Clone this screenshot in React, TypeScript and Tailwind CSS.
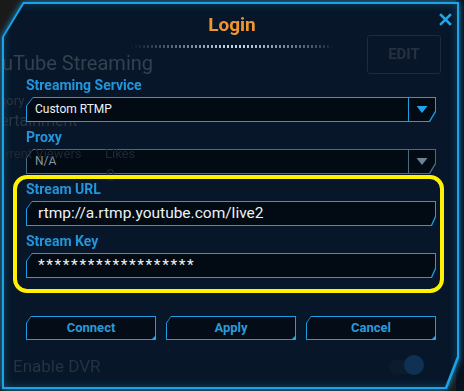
import React from 'react';

const font = { fontFamily: '"Segoe UI", Roboto, "Noto Sans", sans-serif' };

const Field: React.FC<{ label: string; children: React.ReactNode }> = ({ label, children }) => (
  <div className="flex flex-col gap-[3px]">
    <div className="h-[18px] leading-[18px] text-[14px] font-bold text-[#2196dc]">{label}</div>
    {children}
  </div>
);

const SelectBox: React.FC<{ value: string; disabled?: boolean }> = ({ value, disabled }) => (
  <div
    className={`h-[25px] p-px [clip-path:polygon(7px_0,100%_0,100%_calc(100%_-_10px),calc(100%_-_6px)_100%,0_100%,0_9px)] ${
      disabled ? 'bg-[#4d6a80]' : 'bg-[#1b9fe3]'
    }`}
  >
    <div className="h-full flex bg-[#020a13] [clip-path:polygon(6px_0,100%_0,100%_calc(100%_-_10px),calc(100%_-_6px)_100%,0_100%,0_8px)]">
      <div className={`flex-1 pl-[8px] leading-[23px] text-[12px] ${disabled ? 'text-[#8796a3]' : 'text-[#eef2f5]'}`}>
        {value}
      </div>
      <div className={`w-[27px] flex items-center justify-center border-l ${disabled ? 'border-[#4d6a80]' : 'border-[#1b9fe3]'}`}>
        <div
          className={`w-[11px] h-[7px] [clip-path:polygon(0_0,100%_0,50%_100%)] ${
            disabled ? 'bg-[#6b8598]' : 'bg-[#1ea4ea]'
          }`}
        />
      </div>
    </div>
  </div>
);

const TextBox: React.FC<{ value: string; className?: string }> = ({ value, className = '' }) => (
  <div className="h-[25px] p-px bg-[#1b9fe3] [clip-path:polygon(6px_0,100%_0,100%_calc(100%_-_9px),calc(100%_-_4px)_100%,0_100%,0_8px)]">
    <div className="h-full bg-[#020a13] [clip-path:polygon(5px_0,100%_0,100%_calc(100%_-_9px),calc(100%_-_4px)_100%,0_100%,0_7px)]">
      <div className={`pl-[11px] leading-[23px] text-[15.5px] text-[#eef2f5] ${className}`}>{value}</div>
    </div>
  </div>
);

const Btn: React.FC<{ children: React.ReactNode }> = ({ children }) => (
  <div className="relative w-[130px] h-[24px]">
    <div className="h-full p-px bg-[#1b9fe3] [clip-path:polygon(5px_0,100%_0,100%_100%,0_100%,0_7px)]">
      <div className="h-full bg-[#030c17] [clip-path:polygon(4px_0,100%_0,100%_100%,0_100%,0_6px)] flex items-center justify-center text-[13px] font-bold text-[#2a9ad8]">
        {children}
      </div>
    </div>
    <div className="absolute right-0 bottom-0 w-[5px] h-[5px] bg-[#1ea4ea] [clip-path:polygon(100%_0,100%_100%,0_100%)]" />
  </div>
);

export default function App() {
  return (
    <div className="relative w-[464px] h-[391px] overflow-hidden bg-[#1a1a1a]" style={font}>
      <div className="absolute right-0 top-0 bottom-0 w-[8px] bg-[#08111c]" />
      {/* dialog frame */}
      <div className="absolute left-[2px] top-[2px] w-[457px] h-[387px] [filter:drop-shadow(0_0_3px_rgba(27,159,227,0.9))]">
        <div className="h-full p-[2px] bg-[#1ba3ea] [clip-path:polygon(21px_0,100%_0,100%_calc(100%_-_31px),calc(100%_-_12px)_100%,0_100%,0_35px)]">
          <div className="relative h-full flex flex-col pt-[10px] pl-[22px] pr-[21px] bg-[#071628] shadow-[inset_0_0_10px_rgba(27,159,227,0.35)] [clip-path:polygon(20px_0,100%_0,100%_calc(100%_-_31px),calc(100%_-_12px)_100%,0_100%,0_33px)]">
            {/* ghost content of the page behind the dialog */}
            <div className="absolute left-[-2px] top-[47px] text-[20px] text-[#364150] leading-[24px]">uTube Streaming</div>
            <div className="absolute left-[-5px] top-[89px] text-[13px] text-[#2a3442] leading-[16px]">gory</div>
            <div className="absolute left-[-4px] top-[108px] text-[16px] text-[#2a3442] leading-[18px]">ertainment</div>
            <div className="absolute left-[363px] top-[31px] w-[74px] h-[39px] border border-[#1f2b3a] rounded-[3px] flex items-center justify-center text-[15px] font-bold text-[#263140]">
              EDIT
            </div>
            <div className="absolute left-[9px] top-[351px] text-[17px] text-[#263243] leading-[22px]">Enable DVR</div>
            <div className="absolute left-[385px] top-[356px] w-[34px] h-[14px] rounded-full bg-[#0b1c2d]" />
            <div className="absolute left-[400px] top-[351px] w-[20px] h-[20px] rounded-full bg-[#0f3254]" />
            <div className="absolute right-[5px] top-[9px] text-[#1ea4ea]">
              <svg width="13" height="13" viewBox="0 0 13 13">
                <path d="M2 2 L11 11 M11 2 L2 11" stroke="currentColor" strokeWidth="2.6" strokeLinecap="square" />
              </svg>
            </div>

            <div className="relative flex flex-col">
              <div className="h-[22px] leading-[22px] text-center text-[19px] font-bold text-[#f0962e] pl-[2px]">Login</div>
              <div className="mt-[9px] ml-[104px] w-[204px] h-[3px] bg-[radial-gradient(circle,#c9dbe8_1.1px,transparent_1.5px)] bg-[length:4px_3px] [mask-image:linear-gradient(to_right,transparent,rgba(0,0,0,0.5)_25%,black_48%,black_55%,rgba(0,0,0,0.3)_92%,transparent)]" />

              <div className="mt-[28px] flex flex-col gap-[6px]">
                <Field label="Streaming Service">
                  <SelectBox value="Custom RTMP" />
                </Field>
                <Field label="Proxy">
                  <SelectBox value="N/A" disabled />
                </Field>
                <Field label="Stream URL">
                  <TextBox value="rtmp://a.rtmp.youtube.com/live2" />
                </Field>
                <Field label="Stream Key">
                  <TextBox value="*******************" className="tracking-[1.6px]" />
                </Field>
              </div>

              <div className="mt-[38px] flex gap-[10px]">
                <Btn>Connect</Btn>
                <Btn>Apply</Btn>
                <Btn>Cancel</Btn>
              </div>
            </div>

            {/* ghost stats showing through the proxy box */}
            <div className="absolute left-[-6px] top-[142px] text-[13px] text-[#1f2935] leading-[16px] pointer-events-none">urrent Viewers</div>
            <div className="absolute left-[101px] top-[142px] text-[13px] text-[#1f2935] leading-[16px] pointer-events-none">Likes</div>
            <div className="absolute left-[102px] top-[163px] text-[16px] text-[#1c2632] leading-[18px] pointer-events-none">0</div>
          </div>
        </div>
      </div>
      {/* highlight annotation */}
      <div className="absolute left-[13px] top-[175px] w-[431px] h-[118px] border-4 border-[#fff200] rounded-[14px]" />
    </div>
  );
}
